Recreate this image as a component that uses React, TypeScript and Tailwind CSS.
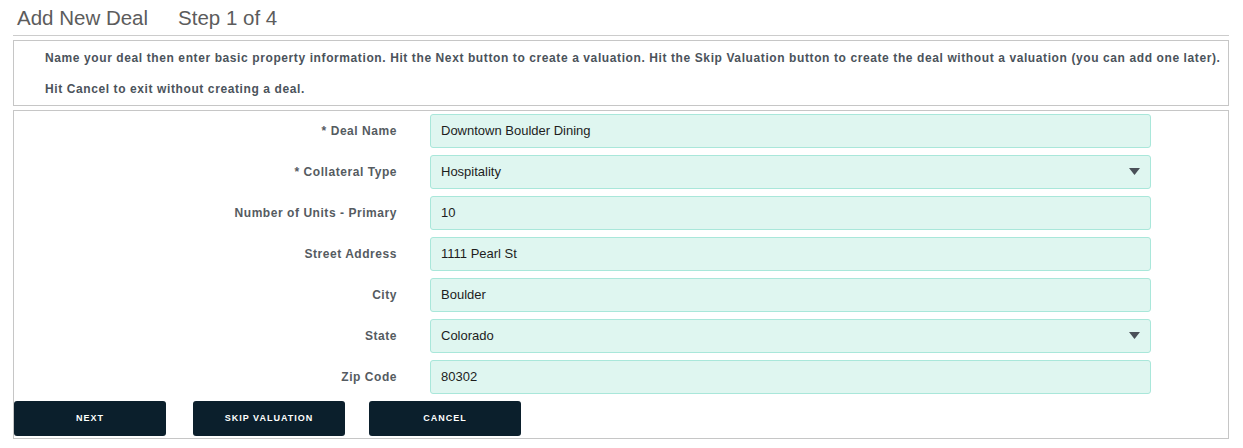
type Field = {
  label: string;
  value: string;
  select?: boolean;
};

const fields: Field[] = [
  { label: "* Deal Name", value: "Downtown Boulder Dining" },
  { label: "* Collateral Type", value: "Hospitality", select: true },
  { label: "Number of Units - Primary", value: "10" },
  { label: "Street Address", value: "1111 Pearl St" },
  { label: "City", value: "Boulder" },
  { label: "State", value: "Colorado", select: true },
  { label: "Zip Code", value: "80302" },
];

function Caret() {
  return (
    <svg width="11" height="8" viewBox="0 0 11 8" className="fill-[#4a5058]">
      <path d="M0 0h11L5.5 7z" />
    </svg>
  );
}

function FormRow({ field }: { field: Field }) {
  return (
    <div className="flex items-center">
      <label className="w-[416px] pr-[33px] text-right text-[12px] font-bold tracking-[0.55px] text-[#555b61]">
        {field.label}
      </label>
      <div className="flex h-[34px] w-[721px] items-center justify-between rounded-[3px] border border-[#a9e7da] bg-[#dff6f0] pl-[10px] pr-[10px] text-[13px] text-[#1d1d1d]">
        <span>{field.value}</span>
        {field.select && <Caret />}
      </div>
    </div>
  );
}

function App() {
  return (
    <div className="h-[448px] w-[1243px] bg-white pl-[13px] pr-[14px] font-['Liberation_Sans',Arial,sans-serif]">
      <div className="flex h-[36px] items-center gap-[30px] border-b border-[#cccccc] pl-[4px] pt-[2px] text-[20.5px] font-light text-[#5c5c5c]">
        <span>Add New Deal</span>
        <span>Step 1 of 4</span>
      </div>
      <div className="mt-[4px] flex h-[66px] flex-col justify-center gap-[15px] border border-[#c6c6c6] pl-[31px] text-[12px] leading-[16px] font-bold tracking-[0.6px] text-[#4b535b]">
        <p>
          Name your deal then enter basic property information. Hit the Next button to create a
          valuation. Hit the Skip Valuation button to create the deal without a valuation (you can
          add one later).
        </p>
        <p>Hit Cancel to exit without creating a deal.</p>
      </div>
      <div className="mt-[4px] h-[329px] border border-[#c6c6c6] pt-[3px]">
        <div className="flex flex-col gap-[7px]">
          {fields.map((f) => (
            <FormRow key={f.label} field={f} />
          ))}
        </div>
        <div className="mt-[7px] flex text-[9px] font-bold tracking-[1px] text-white">
          <button className="h-[35px] w-[152px] rounded-[3px] bg-[#0b1f2c]">NEXT</button>
          <button className="ml-[27px] h-[35px] w-[152px] rounded-[3px] bg-[#0b1f2c]">
            SKIP VALUATION
          </button>
          <button className="ml-[24px] h-[35px] w-[152px] rounded-[3px] bg-[#0b1f2c]">
            CANCEL
          </button>
        </div>
      </div>
    </div>
  );
}

export default App;
